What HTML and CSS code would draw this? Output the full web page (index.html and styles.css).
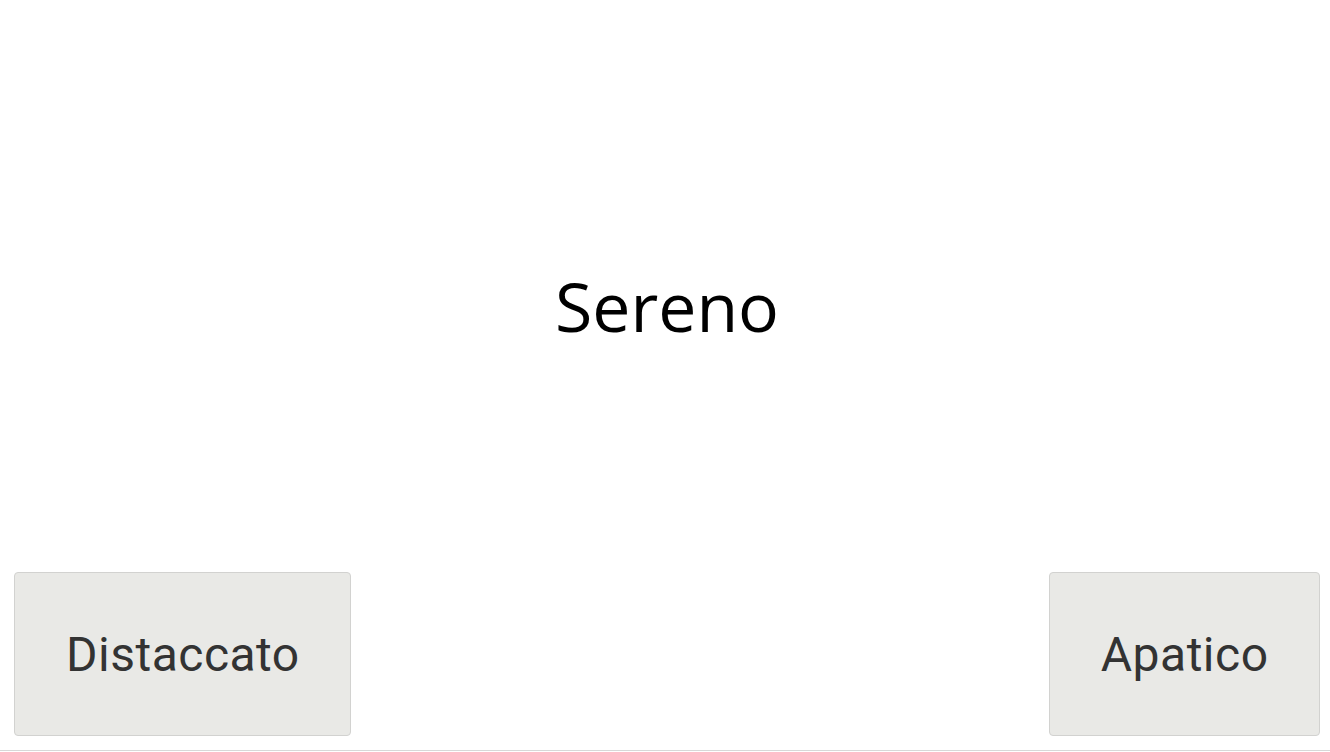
FILE: index.html
```html
<!DOCTYPE html>
<html lang="it">
<head>
<meta charset="utf-8">
<title>Sereno</title>
<link rel="stylesheet" href="styles.css">
</head>
<body>
<div class="app">
  <main class="stage">
    <h1 class="word">Sereno</h1>
  </main>
  <div class="choices">
    <button class="choice">Distaccato</button>
    <button class="choice">Apatico</button>
  </div>
  <div class="rule"></div>
</div>
</body>
</html>
```

FILE: styles.css
```css
html, body {
  margin: 0;
  padding: 0;
  background: #ffffff;
}

.app {
  height: 752px;
  display: flex;
  flex-direction: column;
  overflow: hidden;
}

.stage {
  flex: 1;
  display: flex;
  justify-content: center;
  align-items: flex-start;
  padding-top: 259px;
  padding-left: 4px;
}

.word {
  margin: 0;
  font-family: "Open Sans", "Noto Sans", sans-serif;
  font-weight: 400;
  font-size: 68px;
  color: #000000;
}

.choices {
  display: flex;
  justify-content: space-between;
  align-items: flex-end;
  padding: 0 10px 14px 14px;
}

.choice {
  height: 164px;
  padding: 0 50.5px 0 51px;
  background: #e9e9e6;
  border: 1px solid #d2d2d0;
  border-radius: 4px;
  font-family: Roboto, "Liberation Sans", sans-serif;
  font-size: 48px;
  letter-spacing: 0.5px;
  font-weight: 400;
  color: #333333;
  cursor: pointer;
}

.rule {
  height: 1px;
  background: #d8d8d8;
  margin-bottom: 1px;
}
```
